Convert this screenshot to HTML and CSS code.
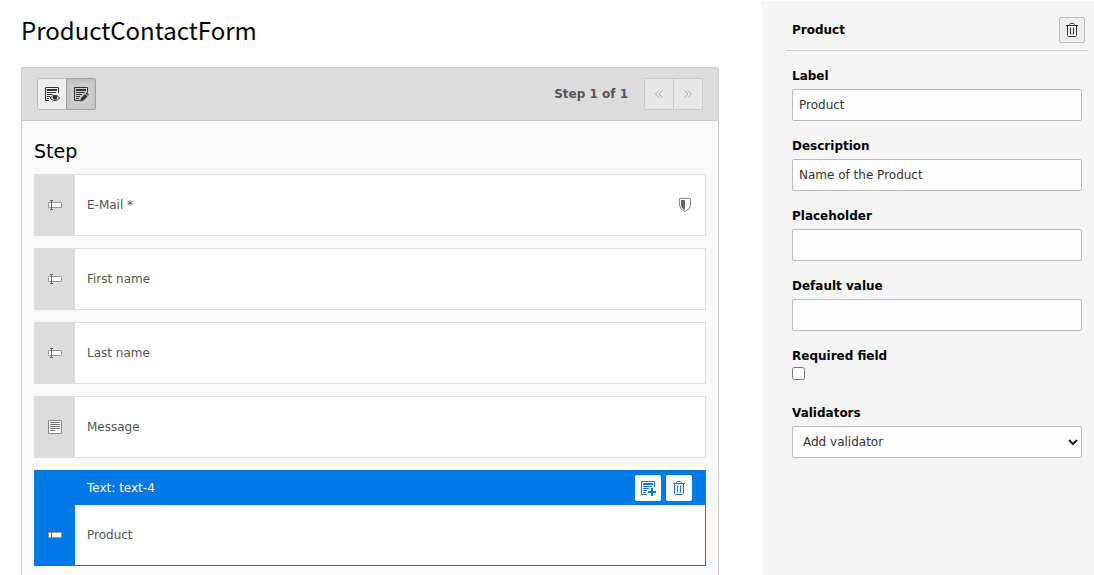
FILE: index.html
```html
<!DOCTYPE html>
<html lang="en">
<head>
  <meta charset="UTF-8" />
  <meta name="viewport" content="width=device-width, initial-scale=1.0" />
  <title>ProductContactForm</title>
  <link rel="stylesheet" href="styles.css">
</head>
<body>
  <!-- shared icon shapes -->
  <svg class="sprite" aria-hidden="true">
    <symbol id="icon-text" viewBox="0 0 16 16">
      <path class="box" d="M1.5 5.5h13v5h-13z" />
      <path class="cursor" d="M3 3.5h3M4.500 3.500v9M3 12.500h3" />
    </symbol>
    <symbol id="icon-textarea" viewBox="0 0 16 16">
      <path fill="#fff" stroke="#888" d="M1.5 1.5h13v13h-13z" />
      <path fill="none" stroke="#777" d="M3 3.5h10M3 5.5h10M3 7.5h10M3 9.5h10M3 11.5h5" />
    </symbol>
    <symbol id="icon-trash" viewBox="0 0 16 16">
      <path fill="none" stroke="currentColor" d="M2 3.5h12M5.500 3.500v-1l1-1h3l1 1v1M3.500 4v9.500l1 1h7l1-1V4M6.500 5.500v7M9.500 5.500v7" />
    </symbol>
    <symbol id="icon-form" viewBox="0 0 16 16">
      <path fill="none" stroke="currentColor" d="M7 14.5H1.5v-13h13V7" />
      <path fill="none" stroke="currentColor" stroke-width="2" d="M3 4h10" />
      <path fill="none" stroke="currentColor" d="M3 6.5h9M3 8.5h6M3 10.5h4M3 12.5h3" />
    </symbol>
  </svg>

  <div class="layout">
    <main class="main">
      <h1>ProductContactForm</h1>

      <div class="panel">
        <div class="panel-header">
          <div class="btn-group">
            <button type="button" class="btn" aria-label="Preview">
              <svg class="icon" viewBox="0 0 16 16">
                <use href="#icon-form" />
                <path fill="#eee" d="M5 12Q11 4 16 11V15H5z" />
                <path fill="#eee" stroke="currentColor" d="M6 12Q11 6.500 15.700 12Q11 17 6 12z" />
                <circle cx="11" cy="11.500" r="2.200" fill="currentColor" />
              </svg>
            </button>
            <button type="button" class="btn active" aria-label="Edit">
              <svg class="icon" viewBox="0 0 16 16">
                <use href="#icon-form" />
                <path stroke="#ccc" stroke-width="5" d="M8 14l7-7" />
                <path fill="currentColor" d="M7 15.500l1-3.500 4-4 2.500 2.500-4 4zM12.700 7.300l1-1 2.300 2.500-1 1z" />
              </svg>
            </button>
          </div>
          <div class="pager">
            <span class="step-count">Step 1 of 1</span>
            <div class="btn-group">
              <button type="button" class="btn" disabled aria-label="Previous step">
                <svg class="icon" viewBox="0 0 16 16"><path fill="none" stroke="currentColor" d="M8 4.500L4.500 8 8 11.500M11.500 4.500L8 8l3.500 3.500" /></svg>
              </button>
              <button type="button" class="btn" disabled aria-label="Next step">
                <svg class="icon" viewBox="0 0 16 16"><path fill="none" stroke="currentColor" d="M4.500 4.500L8 8l-3.500 3.500M8 4.500L11.500 8 8 11.500" /></svg>
              </button>
            </div>
          </div>
        </div>

        <div class="panel-body">
          <h2>Step</h2>
          <div class="element">
            <div class="element-icon"><svg class="icon"><use href="#icon-text" /></svg></div>
            <div class="element-content">
              <span>E-Mail *</span>
              <svg class="icon" viewBox="0 0 16 16">
                <path fill="#fff" stroke="#888" d="M2.500 1.500h11V8q0 4-5.500 6.500Q2.500 12 2.500 8z" />
                <path fill="#666" d="M4 3h4v10Q4 11 4 8z" />
              </svg>
            </div>
          </div>
          <div class="element">
            <div class="element-icon"><svg class="icon"><use href="#icon-text" /></svg></div>
            <div class="element-content"><span>First name</span></div>
          </div>
          <div class="element">
            <div class="element-icon"><svg class="icon"><use href="#icon-text" /></svg></div>
            <div class="element-content"><span>Last name</span></div>
          </div>
          <div class="element">
            <div class="element-icon"><svg class="icon"><use href="#icon-textarea" /></svg></div>
            <div class="element-content"><span>Message</span></div>
          </div>
          <div class="element-selected">
            <div class="element-toolbar">
              <span>Text: text-4</span>
              <div class="toolbar-buttons">
                <button type="button" class="tool-btn" aria-label="Add element">
                  <svg class="icon" viewBox="0 0 16 16">
                    <use href="#icon-form" />
                    <path stroke="#fff" stroke-width="4" d="M12 7v9M7 12h9" />
                    <path stroke="currentColor" stroke-width="2" d="M12 8v8M8 12h8" />
                  </svg>
                </button>
                <button type="button" class="tool-btn" aria-label="Remove element"><svg class="icon"><use href="#icon-trash" /></svg></button>
              </div>
            </div>
            <div class="element">
              <div class="element-icon"><svg class="icon"><use href="#icon-text" /></svg></div>
              <div class="element-content"><span>Product</span></div>
            </div>
          </div>
        </div>
      </div>
    </main>

    <aside class="inspector">
      <div class="inspector-header">
        <h3>Product</h3>
        <button type="button" class="remove-btn" aria-label="Remove"><svg class="icon"><use href="#icon-trash" /></svg></button>
      </div>
      <form class="inspector-form">
        <div class="field">
          <label for="label">Label</label>
          <input type="text" id="label" value="Product" />
        </div>
        <div class="field">
          <label for="description">Description</label>
          <input type="text" id="description" value="Name of the Product" />
        </div>
        <div class="field">
          <label for="placeholder">Placeholder</label>
          <input type="text" id="placeholder" />
        </div>
        <div class="field">
          <label for="default-value">Default value</label>
          <input type="text" id="default-value" />
        </div>
        <div class="field field-check">
          <label for="required">Required field</label>
          <input type="checkbox" id="required" />
        </div>
        <div class="field">
          <label for="validators">Validators</label>
          <div class="select-wrap">
            <select id="validators"><option>Add validator</option></select>
            <svg class="chevron" viewBox="0 0 10 8"><path d="M1 2l4 4 4-4" /></svg>
          </div>
        </div>
      </form>
    </aside>
  </div>
</body>
</html>
```
FILE: styles.css
```css
* {
  box-sizing: border-box;
}
body {
  margin: 0;
  font-family: Verdana, "DejaVu Sans", sans-serif;
  font-size: 12px;
  line-height: 18px;
  color: #555;
  background: #fff;
}
h1, h2, h3 {
  margin: 0;
  color: #000;
}
button, input, select {
  font: inherit;
  margin: 0;
}
.sprite {
  display: none;
}
.icon {
  display: block;
  flex: none;
  width: 16px;
  height: 16px;
}
.layout {
  display: flex;
  height: 100vh;
  overflow: hidden;
}

/* form editor */
.main {
  flex: 1;
  padding: 12px 43px 0 21px;
}
h1 {
  font-family: "Source Sans Pro", "Noto Sans CJK SC", sans-serif;
  font-size: 24px;
  font-weight: 400;
  line-height: 36px;
  margin-bottom: 19px;
}
.panel {
  border: 1px solid #ccc;
  border-radius: 2px;
  background: #fafafa;
  min-height: 100vh;
}
.panel-header {
  display: flex;
  justify-content: space-between;
  align-items: center;
  padding: 10px 15px;
  background: #dcdcdc;
  border-bottom: 1px solid #ccc;
}
.btn-group {
  display: flex;
}
.btn {
  display: flex;
  align-items: center;
  justify-content: center;
  width: 30px;
  height: 32px;
  padding: 0;
  border: 1px solid #bbb;
  border-radius: 2px 0 0 2px;
  background: #eee;
  color: #333;
}
.btn + .btn {
  margin-left: -1px;
  border-radius: 0 2px 2px 0;
}
.btn.active {
  background: #ccc;
  border-color: #a0a0a0;
  box-shadow: inset 0 2px 4px rgba(0,0,0,0.1);
}
.btn:disabled {
  background: #e8e8e8;
  border-color: #c8c8c8;
  color: #aaa;
}
.pager {
  display: flex;
  align-items: center;
  gap: 16px;
}
.step-count {
  font-weight: bold;
}
.panel-body {
  display: flex;
  flex-direction: column;
  gap: 12px;
  padding: 20px 12px;
}
h2 {
  font-size: 19px;
  font-weight: 400;
  line-height: 21px;
}
.element {
  display: flex;
  height: 62px;
  border: 1px solid #ddd;
  background: #fff;
}
.element-icon {
  display: flex;
  align-items: center;
  justify-content: center;
  width: 40px;
  background: #dcdcdc;
}
.box {
  fill: #fff;
  stroke: #999;
}
.cursor {
  fill: none;
  stroke: #666;
}
.element-content {
  flex: 1;
  display: flex;
  align-items: center;
  justify-content: space-between;
  padding: 0 12px;
}
.element-selected {
  background: #0078e6;
}
.element-toolbar {
  display: flex;
  align-items: center;
  justify-content: space-between;
  height: 35px;
  padding: 0 14px 0 53px;
  color: #fff;
}
.toolbar-buttons {
  display: flex;
  gap: 5px;
}
.tool-btn {
  display: flex;
  align-items: center;
  justify-content: center;
  width: 26px;
  height: 26px;
  padding: 0;
  border: none;
  border-radius: 2px;
  background: #fff;
  color: #0078e6;
}
.element-selected .element {
  height: 61px;
  border-color: #0078e6;
  border-top: none;
}
.element-selected .element-icon {
  background: #0078e6;
}

/* inspector */
.inspector {
  width: 332px;
  margin-top: 1px;
  padding: 9px 6px 0 24px;
  background: #f5f5f5;
}
.inspector-header {
  display: flex;
  align-items: center;
  justify-content: space-between;
  height: 41px;
  padding: 0 3px 0 6px;
  border-bottom: 1px solid #ccc;
}
h3 {
  font-size: 12px;
}
.remove-btn {
  display: flex;
  align-items: center;
  justify-content: center;
  width: 26px;
  height: 26px;
  padding: 0;
  border: 1px solid #bbb;
  border-radius: 2px;
  background: #eee;
  color: #333;
}
.inspector-form {
  display: flex;
  flex-direction: column;
  gap: 16px;
  padding: 16px 6px;
}
.field {
  display: flex;
  flex-direction: column;
  gap: 4px;
}
.field label {
  color: #000;
  font-weight: bold;
}
.field input[type="text"],
.field select {
  width: 100%;
  height: 32px;
  padding: 0 6px;
  border: 1px solid #bbb;
  border-radius: 2px;
  background: #fefefe;
  color: #333;
}
.field-check {
  gap: 2px;
  margin-bottom: 8px;
}
.field input[type="checkbox"] {
  width: 13px;
  height: 13px;
}
.select-wrap {
  position: relative;
}
.field select {
  display: block;
  appearance: none;
  padding: 0 10px;
}
.chevron {
  position: absolute;
  right: 4px;
  top: 12px;
  width: 10px;
  height: 8px;
  fill: none;
  stroke: #222;
  stroke-width: 2;
  pointer-events: none;
}
```
